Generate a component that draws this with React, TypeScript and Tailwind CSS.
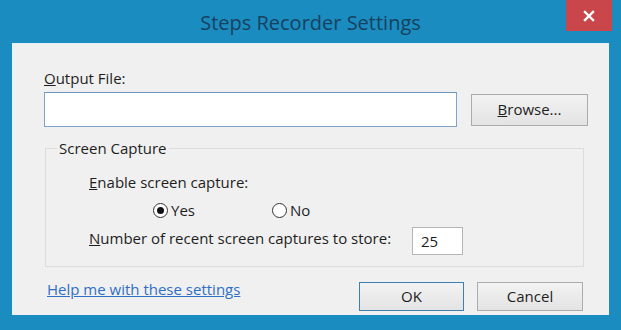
import React, { useState } from 'react';

const font = { fontFamily: '"Open Sans", "Noto Sans", sans-serif' };

const Radio: React.FC<{ checked: boolean; label: string; onClick: () => void }> = ({ checked, label, onClick }) => (
  <button type="button" onClick={onClick} className="flex items-center gap-[3px] text-[15px] text-[#1e1e1e] leading-5">
    <span className="w-[15px] h-[15px] rounded-full border border-[#333] bg-white flex items-center justify-center">
      {checked && <span className="w-[7px] h-[7px] rounded-full bg-[#111]" />}
    </span>
    {label}
  </button>
);

const App: React.FC = () => {
  const [capture, setCapture] = useState(true);
  const [count, setCount] = useState('25');

  return (
    <div style={font} className="w-[621px] h-[330px] bg-[#1a8cbf] flex flex-col overflow-hidden">
      {/* title bar */}
      <div className="relative h-[43px] shrink-0 flex items-center justify-center">
        <span className="text-[20px] leading-6 text-[#17415f] mt-[2px]">Steps Recorder Settings</span>
        <button className="absolute right-[9px] top-0 w-[46px] h-[31px] bg-[#c9474a] flex items-center justify-center">
          <svg width="12" height="12" viewBox="0 0 12 12">
            <path d="M2 2 L10 10 M10 2 L2 10" stroke="#fff" strokeWidth="2.4" strokeLinecap="square" />
          </svg>
        </button>
      </div>

      {/* client area */}
      <div className="mx-[12px] h-[272px] shrink-0 bg-[#f0f0f0] border-t border-l border-[#e4f2f8] flex flex-col pl-[31px] text-[#1e1e1e] text-[15px]">
        <div className="mt-[24px] h-5 leading-5">
          <span className="underline">O</span>utput File:
        </div>

        <div className="mt-[4px] flex items-center">
          <input className="w-[413px] h-[35px] bg-white border border-[#7fa3cb] border-t-[#6f93bf] outline-none px-2" />
          <button className="ml-[14px] w-[117px] h-[32px] border border-[#acacac] bg-gradient-to-b from-[#f2f2f2] to-[#e3e3e3] text-[#1e1e1e]">
            <span className="underline">B</span>rowse...
          </button>
        </div>

        <fieldset className="mt-[11px] ml-[1px] w-[539px] border border-[#dcdcdc] pl-[11px] pb-[11px]">
          <legend className="px-[2px] h-5 leading-5">Screen Capture</legend>
          <div className="pl-[32px]">
            <div className="mt-[14px] h-5 leading-5">
              <span className="underline">E</span>nable screen capture:
            </div>
            <div className="mt-[8px] h-5 flex items-center pl-[64px]">
              <div className="w-[119px]">
                <Radio checked={capture} label="Yes" onClick={() => setCapture(true)} />
              </div>
              <Radio checked={!capture} label="No" onClick={() => setCapture(false)} />
            </div>
            <div className="mt-[7px] h-[28px] flex items-center">
              <span className="leading-5 -mt-[6px]">
                <span className="underline">N</span>umber of recent screen captures to store:
              </span>
              <input
                value={count}
                onChange={(e) => setCount(e.target.value)}
                className="ml-auto mr-[120px] w-[51px] h-[28px] bg-white border border-[#b5b5b5] outline-none px-[8px]"
              />
            </div>
          </div>
        </fieldset>

        <div className="mt-[12px] flex items-start">
          <a href="#" className="ml-[3px] leading-5 text-[#2f6fc4] underline">
            Help me with these settings
          </a>
          <button className="ml-auto mt-[3px] w-[105px] h-[29px] border border-[#3c7fb1] bg-gradient-to-b from-[#f2f2f2] to-[#e4e4e4]">
            OK
          </button>
          <button className="ml-[13px] mr-[26px] mt-[3px] w-[106px] h-[29px] border border-[#acacac] bg-gradient-to-b from-[#f2f2f2] to-[#e4e4e4]">
            Cancel
          </button>
        </div>
      </div>
    </div>
  );
};

export default App;
